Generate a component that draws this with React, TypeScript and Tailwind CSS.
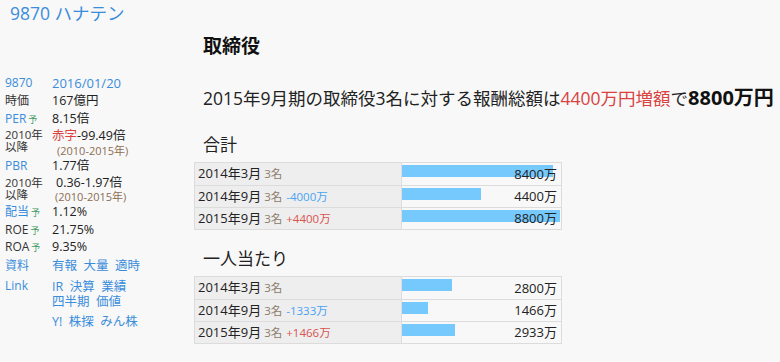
import React from "react";

const FONT = { fontFamily: '"Open Sans", "Noto Sans CJK JP", sans-serif' };

const MAX = 8800;
const FULL = 158;

type Row = { label: string; n: string; diff?: string; diffType?: "up" | "down"; value: number };

const total: Row[] = [
  { label: "2014年3月", n: "3名", value: 8400 },
  { label: "2014年9月", n: "3名", diff: "-4000万", diffType: "down", value: 4400 },
  { label: "2015年9月", n: "3名", diff: "+4400万", diffType: "up", value: 8800 },
];

const per: Row[] = [
  { label: "2014年3月", n: "3名", value: 2800 },
  { label: "2014年9月", n: "3名", diff: "-1333万", diffType: "down", value: 1466 },
  { label: "2015年9月", n: "3名", diff: "+1466万", diffType: "up", value: 2933 },
];

function Table({ rows }: { rows: Row[] }) {
  return (
    <div className="w-[368px] border border-[#dcdcdc]">
      {rows.map((r, i) => (
        <div key={i} className={`flex h-[22px] ${i > 0 ? "border-t border-[#dcdcdc]" : ""}`}>
          <div className="w-[207px] bg-[#eeeeee] border-r border-[#dcdcdc] flex items-center pl-[3px] whitespace-nowrap">
            <span className="text-[13px] text-[#222]">{r.label}</span>
            <span className="text-[11.5px] text-[#8a7b6b] ml-[3px]">{r.n}</span>
            {r.diff && (
              <span
                className={`text-[11.5px] ml-[4px] ${r.diffType === "down" ? "text-[#4aa3f5]" : "text-[#d9534f]"}`}
              >
                {r.diff}
              </span>
            )}
          </div>
          <div className="relative flex-1 flex items-center justify-end pr-[4px]">
            <div
              className="absolute left-0 top-[2px] h-[12px] bg-[#76c9fc]"
              style={{ width: Math.round((r.value / MAX) * FULL) }}
            />
            <span className="relative text-[13px] text-[#222] pt-[1px]">{r.value}万</span>
          </div>
        </div>
      ))}
    </div>
  );
}

function Yo() {
  return <span className="text-[9px] text-[#3f9a62] ml-[2px]">予</span>;
}

function SideRow({
  label,
  children,
  h,
  labelBlue,
}: {
  label: React.ReactNode;
  children: React.ReactNode;
  h: string;
  labelBlue?: boolean;
}) {
  return (
    <div className={`flex ${h}`}>
      <div className={`w-[47px] text-[12px] ${labelBlue ? "text-[#3a8ddb]" : "text-[#333]"}`}>{label}</div>
      <div className="flex-1 text-[12.5px] text-[#222]">{children}</div>
    </div>
  );
}

export default function App() {
  return (
    <div className="w-[780px] h-[362px] bg-[#f8f8f8] flex overflow-hidden" style={FONT}>
      <div className="w-[194px] shrink-0 pl-[5px]">
        <div className="pt-[3px] pl-[5px] text-[17.5px] leading-[20px] text-[#3a8ddb]">9870 ハナテン</div>
        <div className="mt-[51px] leading-[18px]">
          <SideRow h="h-[18px]" label="9870" labelBlue>
            <span className="text-[#3a8ddb] text-[13px]">2016/01/20</span>
          </SideRow>
          <SideRow h="h-[18px]" label="時価">
            167億円
          </SideRow>
          <SideRow
            h="h-[17px]"
            labelBlue
            label={
              <>
                PER<Yo />
              </>
            }
          >
            8.15倍
          </SideRow>
          <div className="flex h-[30px]">
            <div className="w-[47px] text-[11.5px] leading-[12px] text-[#333] pt-[2px]">
              2010年
              <br />
              以降
            </div>
            <div className="flex-1">
              <div className="text-[12.5px] leading-[18px] text-[#222]">
                <span className="text-[#d9423f]">赤字</span>-99.49倍
              </div>
              <div className="text-[11px] leading-[12px] text-[#8c6e54] pl-[5px]">(2010-2015年)</div>
            </div>
          </div>
          <SideRow h="h-[18px]" label="PBR" labelBlue>
            1.77倍
          </SideRow>
          <div className="flex h-[28px]">
            <div className="w-[47px] text-[11.5px] leading-[12px] text-[#333] pt-[2px]">
              2010年
              <br />
              以降
            </div>
            <div className="flex-1">
              <div className="text-[12.5px] leading-[16px] text-[#222] pl-[4px]">0.36-1.97倍</div>
              <div className="text-[11px] leading-[12px] text-[#8c6e54] pl-[3px]">(2010-2015年)</div>
            </div>
          </div>
          <SideRow
            h="h-[18px]"
            labelBlue
            label={
              <>
                配当<Yo />
              </>
            }
          >
            1.12%
          </SideRow>
          <SideRow
            h="h-[17px]"
            label={
              <>
                ROE<Yo />
              </>
            }
          >
            21.75%
          </SideRow>
          <SideRow
            h="h-[19px]"
            label={
              <>
                ROA<Yo />
              </>
            }
          >
            9.35%
          </SideRow>
          <SideRow h="h-[21px]" label="資料" labelBlue>
            <span className="text-[#3a8ddb]">有報&nbsp;&nbsp;大量&nbsp;&nbsp;適時</span>
          </SideRow>
          <div className="flex">
            <div className="w-[47px] text-[12px] leading-[15px] text-[#3a8ddb]">Link</div>
            <div className="flex-1 text-[12.5px] leading-[15px] text-[#3a8ddb] pt-[1px]">
              <div>IR&nbsp;&nbsp;決算&nbsp;&nbsp;業績</div>
              <div>四半期&nbsp;&nbsp;価値</div>
              <div className="mt-[5px]">Y!&nbsp;&nbsp;株探&nbsp;&nbsp;みん株</div>
            </div>
          </div>
        </div>
      </div>
      <div className="flex-1 flex flex-col">
        <div className="mt-[34px] pl-[9px] text-[19px] leading-[24px] font-bold text-[#111]">取締役</div>
        <div className="mt-[27px] pl-[9px] text-[17.5px] leading-[26px] text-[#222] whitespace-nowrap">
          2015年9月期の取締役3名に対する報酬総額は<span className="text-[#d9423f]">4400万円増額</span>で
          <span className="text-[20px] font-bold text-[#111]">8800万円</span>
        </div>
        <div className="mt-[23px] pl-[9px] text-[17px] leading-[22px] text-[#222]">合計</div>
        <div className="mt-[6px]">
          <Table rows={total} />
        </div>
        <div className="mt-[18px] pl-[9px] text-[17px] leading-[22px] text-[#222]">一人当たり</div>
        <div className="mt-[6px]">
          <Table rows={per} />
        </div>
      </div>
    </div>
  );
}
